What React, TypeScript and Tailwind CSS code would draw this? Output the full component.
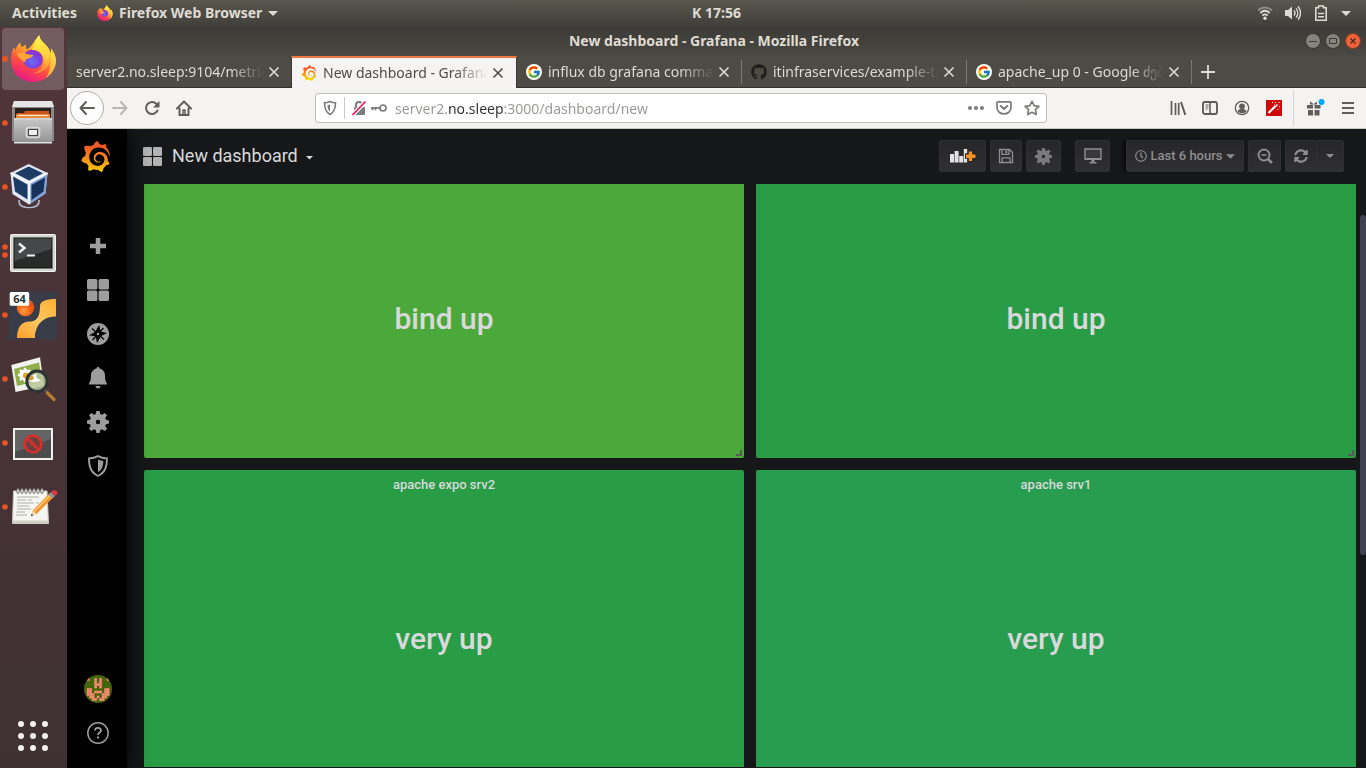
import React from "react";
import { FcGoogle } from "react-icons/fc";
import { FaGithub, FaSyncAlt, FaRegClock } from "react-icons/fa";
import { SiGrafana } from "react-icons/si";

type Children = { children: React.ReactNode };

function FirefoxLogo({ className }: { className: string }) {
  return (
    <svg viewBox="0 0 48 50" className={className} aria-hidden="true">
      <defs>
        <linearGradient id="ff-body" x1="0.75" y1="0" x2="0.3" y2="1">
          <stop offset="0" stopColor="#fff44f" />
          <stop offset="0.35" stopColor="#ffb52b" />
          <stop offset="0.65" stopColor="#ff4f3e" />
          <stop offset="1" stopColor="#e6168c" />
        </linearGradient>
        <linearGradient id="ff-flame" x1="0.5" y1="0" x2="0.6" y2="1">
          <stop offset="0" stopColor="#fff44f" />
          <stop offset="0.6" stopColor="#ffcd3a" />
          <stop offset="1" stopColor="#ff7139" />
        </linearGradient>
        <radialGradient id="ff-globe" cx="0.45" cy="0.65" r="0.65">
          <stop offset="0" stopColor="#6a6cf6" />
          <stop offset="0.6" stopColor="#7a3fe0" />
          <stop offset="1" stopColor="#a62bbb" />
        </radialGradient>
      </defs>
      <path d="M3 13c1 1 1.500 2 2 3C6 12 8 9.500 10 8c0 2 .6 3.600 1.600 5 1.400-1.200 3-2.200 4.400-2.800-.4 2 0 3.800 1 5.200 2-1.200 4-3 5.500-5C25 6.500 27.500 3 30 0c.4 4 2.500 6.500 6 9.500 3.400 3 5.600 6.500 6.200 10 .7-1.400.8-3.300.3-5.500C46 18 48 23 48 27.500 47.500 40 37 50 24 50S0 40 0 27c0-5 .8-9.800 3-14Z" fill="url(#ff-body)" />
      <path d="M42.500 14C46 18 48 23 48 27.500c-.4 8-4.500 14.500-11 18.500 4-6 6-12 5.200-26.500.7-1.400.8-3.300.3-5.500Z" fill="#ffe04a" fillOpacity="0.700" />
      <circle cx="23.500" cy="25.500" r="10.500" fill="url(#ff-globe)" />
      <path d="M30 0c.4 4 2.500 6.500 6 9.500 5 4.500 7 9.500 6.400 15C41.500 36 33 41.500 24 41c7-2.500 11.500-8 11-14.500-.4-4.500-3.600-7.500-7-9.500-2-1-4-1.300-6-1C25.500 11.500 25 6.500 30 0Z" fill="url(#ff-flame)" />
      <path d="M6 20c4-2 7-1.600 10-.2 2.500 1 5 1.200 8 1.200-1 2.500-3.500 3.500-7 4.500-1.500.5-2 2-1.400 3.700-3.600-1-6.600-4.200-9.600-9.200Z" fill="#ffa436" />
    </svg>
  );
}

function GrafanaLogo({ className, from, to }: { className: string; from: string; to: string }) {
  const id = React.useId();
  return (
    <>
      <svg width="0" height="0" className="absolute" aria-hidden="true">
        <defs>
          <linearGradient id={id} x1="0" y1="0" x2="0" y2="1">
            <stop offset="0.200" stopColor={from} />
            <stop offset="1" stopColor={to} />
          </linearGradient>
        </defs>
      </svg>
      <SiGrafana className={className} fill={`url(#${id})`} stroke="none" aria-hidden="true" />
    </>
  );
}

function DockItem({ label, dots = [32], children }: Children & { label: string; dots?: number[] }) {
  return (
    <button type="button" aria-label={label} className="block h-16 w-full">
      <svg viewBox="0 0 67 64" className="h-16 w-full">
        {dots.map((y) => (
          <circle key={y} cx="5" cy={y} r="2.800" fill="#e95420" />
        ))}
        {children}
      </svg>
    </button>
  );
}

function Dock() {
  return (
    <nav aria-label="Dock" className="flex w-[67px] shrink-0 flex-col bg-linear-to-b from-[#513539] to-[#3e3134]">
      <button type="button" aria-label="Firefox Web Browser" className="flex h-16 w-full items-center">
        <span className="ml-0.5 flex h-[62px] w-[62px] items-center rounded bg-[#735c60]">
          <span className="mr-[3px] h-1.5 w-1.5 rounded-full bg-[#e95420]" />
          <FirefoxLogo className="mb-0.5 h-[47px] w-[45px] shrink-0" />
        </span>
      </button>
      <DockItem label="Files">
        <defs>
          <linearGradient id="cab" x1="0" y1="0" x2="0" y2="1">
            <stop offset="0" stopColor="#c9c9c9" />
            <stop offset="1" stopColor="#8e8e8e" />
          </linearGradient>
        </defs>
        <path d="M14 10h38l2 6v34h-2v3H14v-3h-2V16Z" fill="#8a8a8a" />
        <path d="M14 10h38l2 6H12Z" fill="#e4e4e4" />
        <rect x="15" y="17" width="36" height="11" fill="#2b211c" />
        <path d="M17 22h7l1-2h24v8H17Z" fill="#c8561b" />
        <path d="M16 23h34v5H16Z" fill="#e98b3c" />
        <path d="M18 24.500h30" stroke="#fbe6cf" />
        <path d="M14 27h38v26H14Z" fill="url(#cab)" />
        <path d="M14 28h38M14 51.500h38" stroke="#dedede" />
        <rect x="26.500" y="36.500" width="13" height="10" rx="2" fill="#b0b0b0" stroke="#dadada" strokeWidth="1.500" />
        <rect x="28.500" y="38.500" width="9" height="6" fill="#eee" stroke="#444" />
      </DockItem>
      <DockItem label="VirtualBox">
        <path d="M19 45c0 10 20 10 20 0v4c-1 5-19 5-20 0Z" fill="#6c7f9d" stroke="#b8c4d6" />
        <path d="M28.700 9 47.500 18 45.500 38.500 29 49.500 12.500 39 10.500 18Z" fill="#dfe6f1" />
        <path d="M29.300 28.500 47.500 18.500 45.500 38.500 29.300 49.500Z" fill="#7da0d6" />
        <path d="M28.700 11.500 43 18.300 29.200 25.500 15 18.300Z" fill="#1d3c66" />
        <path d="M13 21.500 27.500 29.500V44.500L15 36.500Z" fill="#1b3a64" />
        <path d="M31.500 30 45 22.500 43.500 36.500 31.500 45Z" fill="#173258" />
        <path d="M10.500 18 29.300 28 47.500 18M29.300 28V49" fill="none" stroke="#f4f7fb" strokeWidth="2" />
      </DockItem>
      <DockItem label="Terminal" dots={[28, 36]}>
        <rect x="10.500" y="15.500" width="45" height="37" rx="1" fill="#d5d5d2" stroke="#f3f3f1" />
        <rect x="14" y="19" width="38" height="30" fill="#292b2b" stroke="#111" />
        <path d="M14.500 19.500h37V30l-37 12Z" fill="#454848" />
        <path d="m19 24.500 5.500 4.500-5.500 4.500" fill="none" stroke="#f0f0f0" strokeWidth="2.400" />
        <path d="M27 36.500h8" stroke="#f0f0f0" strokeWidth="2" />
      </DockItem>
      <DockItem label="Sixty-four bit tool">
        <defs>
          <linearGradient id="ribbon" x1="1" y1="0" x2="0" y2="1">
            <stop offset="0" stopColor="#ffae2e" />
            <stop offset="0.500" stopColor="#ffc862" />
            <stop offset="1" stopColor="#ff9d2b" />
          </linearGradient>
          <radialGradient id="ball" cx="0.4" cy="0.7">
            <stop offset="0" stopColor="#ff9c3d" />
            <stop offset="1" stopColor="#f0520f" />
          </radialGradient>
        </defs>
        <rect x="9" y="8.500" width="48" height="48" fill="#383d49" />
        <circle cx="25.500" cy="24.500" r="8.700" fill="url(#ball)" />
        <path d="M56 16c-7 0-16 1-16 7 0 10-3 15-9 15.500-8 0-13.500 3-14 16.500h18c0-13 8-21.500 21-21.500Z" fill="url(#ribbon)" />
        <rect x="9.700" y="9" width="19.500" height="13.700" rx="1.500" fill="#fff" />
        <text x="19.500" y="20" textAnchor="middle" fontFamily="Noto Sans, sans-serif" fontWeight="700" fontSize="11" fill="#2e3436">64</text>
      </DockItem>
      <DockItem label="Image Viewer">
        <path d="m11.300 18 28.700-7.700L44 39l-28.500 6Z" fill="#f1f3ec" />
        <path d="m14 22 25-6.500L42 33l-25 6Z" fill="#8fae49" />
        {[0, 45, 90, 135].map((angle) => (
          <ellipse key={angle} cx="25" cy="28" rx="7.500" ry="2.400" fill="#fff" transform={`rotate(${angle} 25 28)`} />
        ))}
        <circle cx="26" cy="28.500" r="3" fill="#e5a02c" />
        <path d="m44.500 42.500 3.500 3.500" stroke="#555" strokeWidth="3" />
        <path d="m47.500 46 6.500 6.500" stroke="#b67a33" strokeWidth="3.200" strokeLinecap="round" />
        <circle cx="37" cy="34.300" r="10.200" fill="#b9c69a" fillOpacity="0.850" stroke="#2d3436" strokeWidth="3" />
        <path d="M29 34c1-5 5-7 8-7-2 3 0 5 4 6-3 2-8 3-12 1Z" fill="#fff" />
        <path d="M29 31c2-3 4-3 5 0-1 2-3 3-5 2Z" fill="#d59b33" />
      </DockItem>
      <DockItem label="Blocked display">
        <rect x="14" y="18" width="38" height="30" fill="#4b4c4b" stroke="#f1f1f1" strokeWidth="2" />
        <path d="M15 19h36v9L15 41Z" fill="#636463" />
        <circle cx="33" cy="33" r="8.300" fill="#6b4140" stroke="#d3302c" strokeWidth="2.800" />
        <path d="m27 27 12 12" stroke="#d3302c" strokeWidth="3" />
      </DockItem>
      <DockItem label="Text Editor">
        <path d="M13.500 16h33.500l1.500 32.500h-36Z" fill="#f5f5f2" stroke="#c9c9c5" />
        <path d="M13 45.500h35V48H13Z" fill="#cfd0c6" />
        <path d="M17 22h22M17 25h9m2 0h4M17 28h17m2 0h3M17 31h12M17 34h14M16 37h9M16 40h11" stroke="#b0b0ae" />
        {[18, 22, 26, 30, 34, 38, 42].map((x) => (
          <ellipse key={x} cx={x} cy="16" rx="1.200" ry="2.600" fill="#fff" stroke="#6d6f6a" />
        ))}
        <path d="m31 41 1.800-5.500L50 17.800l4 3.900L36.500 39Z" fill="#f2952c" />
        <path d="m31 41 1.800-5.500 3.700 3.500Z" fill="#f1dcb4" />
        <path d="m31 41 .7-2.200 1.500 1.500Z" fill="#111" />
        <path d="m34 36.500 17-17" stroke="#fbc778" strokeWidth="1.500" />
        <path d="m48.500 19.500 2.500-2.500 4 4-2.500 2.500Z" fill="#8b9499" />
        <path d="m51 17 2-1.500c3-.8 5 1.500 4 4L55 21Z" fill="#e0393c" />
      </DockItem>
      <button type="button" aria-label="Show Applications" className="mr-auto mt-auto mb-4 ml-[17px] grid grid-cols-3 gap-1.5 p-px">
        {Array.from({ length: 9 }, (_, i) => (
          <span key={i} className="h-1.5 w-1.5 rounded-full bg-[#f2f0ee]" />
        ))}
      </button>
    </nav>
  );
}

function TopBar() {
  return (
    <header className="grid h-[27px] shrink-0 grid-cols-[1fr_auto_1fr] items-center bg-linear-to-b from-[#5a574e] to-[#3f3e39] pb-px text-sm font-bold text-[#dfdbd2]">
      <div className="flex items-center pl-3">
        <button type="button">Activities</button>
        <button type="button" className="ml-5 flex items-center gap-1.5">
          <FirefoxLogo className="h-4 w-4" />
          <span>Firefox Web Browser</span>
          <svg viewBox="0 0 10 5" className="h-[5px] w-2.5"><path d="M0 0h10L5 5Z" fill="#dfdbd2" /></svg>
        </button>
      </div>
      <time className="pl-[67px]">K 17:56</time>
      <button type="button" aria-label="System menu" className="flex items-center justify-end gap-3 pr-[15px]">
        <svg viewBox="0 0 16 16" className="h-4 w-4" fill="none" strokeWidth="1.800">
          <path d="M1 5.500c4-4 10-4 14 0" stroke="#8d8a83" />
          <path d="M3.300 8c3-2.800 6.400-2.800 9.400 0M5.300 10.600c1.800-1.600 3.600-1.600 5.400 0" stroke="#dfdbd2" />
          <circle cx="8" cy="13.300" r="1.700" fill="#dfdbd2" />
        </svg>
        <svg viewBox="0 0 16 16" className="h-4 w-4" fill="none" stroke="#dfdbd2" strokeWidth="1.400">
          <path d="M0 5h3l4-3.500v13L3 11H0Z" fill="#dfdbd2" stroke="none" />
          <path d="M9 5.500c1.200 1.500 1.200 3.500 0 5M11 3.500c2.300 2.600 2.300 6.400 0 9M13 1.500c3.300 3.600 3.300 9.400 0 13" />
        </svg>
        <svg viewBox="0 0 16 16" className="h-4 w-4" fill="none" stroke="#dfdbd2" strokeWidth="1.600">
          <path d="M5.500 2.800V1h5v1.800h2.700v12.400H2.800V2.800ZM5 8.500h6M5 11.800h6" />
        </svg>
        <svg viewBox="0 0 10 5" className="h-[5px] w-2.5"><path d="M0 0h10L5 5Z" fill="#dfdbd2" /></svg>
      </button>
    </header>
  );
}

function TitleBar() {
  return (
    <div className="grid h-[29px] shrink-0 grid-cols-[1fr_auto_1fr] items-center bg-linear-to-b from-[#3c3b37] to-[#4a4842] pr-[5px] pb-0.5">
      <span />
      <h1 className="text-sm font-bold text-[#dfdbd2]">New dashboard - Grafana - Mozilla Firefox</h1>
      <div className="flex justify-end gap-1">
        <button type="button" aria-label="Minimize" className="h-4 w-4 rounded-full border border-[#363530] bg-[#85837c]">
          <svg viewBox="0 0 14 14"><path d="M3 7.500h8" stroke="#3c3b37" /></svg>
        </button>
        <button type="button" aria-label="Maximize" className="h-4 w-4 rounded-full border border-[#363530] bg-[#85837c]">
          <svg viewBox="0 0 14 14"><path d="M3.500 4.500h7v5h-7Z" fill="none" stroke="#3c3b37" /></svg>
        </button>
        <button type="button" aria-label="Close window" className="h-4 w-4 rounded-full border border-[#8c3a1d] bg-[#ee6137]">
          <svg viewBox="0 0 14 14"><path d="m4.500 4.500 5 5m0-5-5 5" stroke="#46281c" strokeWidth="1.300" /></svg>
        </button>
      </div>
    </div>
  );
}

function Tab({ title, icon, active, divider }: { title: string; icon?: React.ReactNode; active?: boolean; divider?: boolean }) {
  return (
    <div
      className={
        active
          ? "-ml-px flex min-w-0 flex-[0_1_226px] items-center border-x border-t-2 border-x-[#3a3934] border-t-[#f07746] bg-[#f5f4f2] pr-3 pl-[9px] text-[#4c4c4c]"
          : "relative flex min-w-0 flex-[0_1_225px] items-center border-b border-[#33322e] pr-3 pl-[9px] text-[#dfdbd2]"
      }
    >
      {icon && <span className="mr-1.5 shrink-0">{icon}</span>}
      <button type="button" className="min-w-0 flex-1 overflow-hidden text-left text-sm whitespace-nowrap [mask-image:linear-gradient(to_right,black_calc(100%-34px),transparent)]">
        {title}
      </button>
      <button type="button" aria-label={`Close ${title}`} className="ml-1 h-3 w-3 shrink-0">
        <svg viewBox="0 0 12 12" className="h-3 w-3"><path d="m1.500 1.500 9 9m0-9-9 9" stroke="currentColor" strokeWidth="1.600" /></svg>
      </button>
      {divider && <span className="absolute top-1 right-0 h-6 w-px bg-[#7d7a72]" />}
    </div>
  );
}

function GoogleBadge() {
  return (
    <span className="flex h-4 w-4 items-center justify-center rounded-full bg-white">
      <FcGoogle className="h-3.5 w-3.5" />
    </span>
  );
}

function TabStrip() {
  return (
    <div className="flex h-8 shrink-0 bg-[#4e4b44]">
      <Tab title="server2.no.sleep:9104/metrics" />
      <Tab active title="New dashboard - Grafana" icon={<GrafanaLogo className="h-4 w-4" from="#f05a28" to="#ffe600" />} />
      <Tab divider title="influx db grafana command" icon={<GoogleBadge />} />
      <Tab divider title="itinfraservices/example-tools" icon={<FaGithub className="h-4 w-4 text-[#1f1f1d]" />} />
      <Tab divider title="apache_up 0 - Google ძებნა" icon={<GoogleBadge />} />
      <div className="flex flex-1 items-center border-b border-[#33322e] pl-[9px] text-[#dfdbd2]">
        <button type="button" aria-label="New tab" className="h-3.5 w-3.5">
          <svg viewBox="0 0 14 14" className="h-3.5 w-3.5"><path d="M7 0v14M0 7h14" stroke="currentColor" strokeWidth="1.800" /></svg>
        </button>
      </div>
    </div>
  );
}

function IconButton({ label, children, className = "" }: Children & { label: string; className?: string }) {
  return (
    <button type="button" aria-label={label} className={`flex h-8 w-8 shrink-0 items-center justify-center text-[#5e5e5c] ${className}`}>
      {children}
    </button>
  );
}

const ICON = "h-4 w-4";

function NavToolbar() {
  return (
    <div className="flex h-[41px] shrink-0 items-center border-b border-[#c9c5bf] bg-[#f4f3f1]">
      <button type="button" aria-label="Back" className="ml-[3px] flex h-[34px] w-[34px] shrink-0 items-center justify-center rounded-full border border-[#b0aeaa] bg-[#fdfdfd] text-[#5e5e5c]">
        <svg viewBox="0 0 16 16" className={ICON} fill="none" stroke="currentColor" strokeWidth="2" strokeLinecap="round" strokeLinejoin="round"><path d="M15 8H1.500m5.500 6L1.500 8 7 2" /></svg>
      </button>
      <IconButton label="Forward">
        <svg viewBox="0 0 16 16" className="h-4 w-4 text-[#b9b8b6]" fill="none" stroke="currentColor" strokeWidth="2" strokeLinecap="round" strokeLinejoin="round"><path d="M1 8h13.500M9 2l5.500 6L9 14" /></svg>
      </IconButton>
      <IconButton label="Reload">
        <svg viewBox="0 0 16 16" className={ICON} fill="none" stroke="currentColor" strokeWidth="2"><path d="M13.500 10.500A6 6 0 1 1 12.500 4L14 6" strokeLinecap="round" /><path d="M15.500 1v6.500H9Z" fill="currentColor" stroke="none" /></svg>
      </IconButton>
      <IconButton label="Home">
        <svg viewBox="0 0 16 16" className={ICON} fill="none" stroke="currentColor" strokeWidth="2" strokeLinecap="round" strokeLinejoin="round"><path d="M1 8.500 8 1.500l7 7M3.500 8.500V15h9V8.500" /><path d="M7 14.500V10h2v4.500" strokeWidth="1.500" /></svg>
      </IconButton>
      <div className="grow-[116] basis-0" />
      <div className="flex h-[30px] grow-[730] basis-0 items-center rounded-[3px] border border-[#c3c0bc] bg-white pl-1.5 text-[#7b7b7a]">
        <button type="button" aria-label="Tracking protection" className="shrink-0">
          <svg viewBox="0 0 16 16" className={ICON} fill="none" stroke="currentColor" strokeWidth="1.600"><path d="M8 1.500c2 1 3.700 1.300 5.500 1.300 0 5.200-.8 9.200-5.500 11.700C3.300 12 2.500 8 2.500 2.800 4.300 2.800 6 2.500 8 1.500Z" /><path d="M8 4.500c-1 .5-1.600.6-2.600.8.2 3 .8 5 2.600 6.400Z" fill="currentColor" stroke="none" /></svg>
        </button>
        <span className="mx-1.5 h-[22px] w-px shrink-0 bg-[#c9c7c4]" />
        <button type="button" aria-label="Connection is not secure" className="shrink-0">
          <svg viewBox="0 0 16 16" className={ICON}><path d="M5 7V5a3 3 0 0 1 6 0v2" fill="none" stroke="currentColor" strokeWidth="2" /><rect x="3" y="7" width="11" height="8" rx="1" fill="currentColor" /><path d="M2 14.500 14.500 1.500" stroke="#fff" strokeWidth="4" /><path d="M1.500 15 14.500 1.500" stroke="#f5145b" strokeWidth="1.800" /></svg>
        </button>
        <button type="button" aria-label="Saved login" className="ml-1 shrink-0">
          <svg viewBox="0 0 16 16" className={ICON} fill="none" stroke="currentColor" strokeWidth="1.700"><circle cx="12" cy="8" r="3" /><path d="M0 7.800h9M1.500 8v2.300M4.500 8v2.300" /></svg>
        </button>
        <input
          type="text"
          aria-label="Address"
          defaultValue="server2.no.sleep:3000/dashboard/new"
          className="ml-2 h-full min-w-0 flex-1 bg-[linear-gradient(to_right,#979795_54px,#2f2f2f_54px,#2f2f2f_108px,#979795_108px)] bg-clip-text text-sm text-transparent outline-none"
        />
        <button type="button" aria-label="Page actions" className="mr-3 shrink-0">
          <svg viewBox="0 0 16 16" className={ICON} fill="currentColor"><circle cx="2" cy="8" r="2" /><circle cx="8" cy="8" r="2" /><circle cx="14" cy="8" r="2" /></svg>
        </button>
        <button type="button" aria-label="Save to Pocket" className="mr-3 shrink-0">
          <svg viewBox="0 0 16 16" className={ICON} fill="none" stroke="currentColor" strokeWidth="1.700" strokeLinecap="round" strokeLinejoin="round"><path d="M2 1.800h12c.6 0 1 .4 1 1v4.400c0 9-14 9-14 0V2.800c0-.6.4-1 1-1Z" /><path d="M4.800 6 8 9l3.200-3" strokeWidth="2" /></svg>
        </button>
        <button type="button" aria-label="Bookmark this page" className="mr-1.5 shrink-0">
          <svg viewBox="0 0 16 16" className={ICON} fill="none" stroke="currentColor" strokeWidth="1.700" strokeLinejoin="round"><path d="m8 1.300 2.100 4.400 4.800.6-3.500 3.400.9 4.800L8 12.200l-4.300 2.300.9-4.800L1.100 6.300l4.800-.6Z" /></svg>
        </button>
      </div>
      <div className="grow-[116] basis-0" />
      <IconButton label="Library">
        <svg viewBox="0 0 16 16" className={ICON} stroke="currentColor" strokeWidth="2"><path d="M1.500 1v14M5.500 3v12M8.700 3v12" strokeWidth="1.700" /><path d="m11 2 4.300 13" /></svg>
      </IconButton>
      <IconButton label="Sidebars">
        <svg viewBox="0 0 16 16" className={ICON} fill="none" stroke="currentColor"><rect x="1" y="2" width="14" height="12" rx="2" strokeWidth="1.900" /><path d="M8 2v12" strokeWidth="1.600" /><path d="M3.500 5h3M3.500 7h3M3.500 9h2" /></svg>
      </IconButton>
      <IconButton label="Account">
        <svg viewBox="0 0 16 16" className={ICON} fill="currentColor"><circle cx="8" cy="8" r="6.700" fill="none" stroke="currentColor" strokeWidth="1.300" /><circle cx="8" cy="6.300" r="2.900" /><path d="M3.500 11c1-1.500 2-2 4.500-2s3.500.5 4.500 2c-1 1.500-2.500 2.300-4.500 2.300S4.500 12.500 3.500 11Z" /></svg>
      </IconButton>
      <IconButton label="Magic wand">
        <svg viewBox="0 0 16 16" className={ICON}><rect width="16" height="16" fill="#cd0a0a" /><path d="m2.500 13 7-7" stroke="#fff" strokeWidth="2.200" /><path d="m9.500 6.500 2-2" stroke="#fff" strokeWidth="1.500" /><path d="M6 2.500h1M9 2l.7 1M12.500 3l1-1M13 6.500l1 .5M11.500 9l1 1M8 4l.5.5" stroke="#fff" /></svg>
      </IconButton>
      <span className="ml-[3px] h-[34px] w-px bg-[#d6d3cf]" />
      <IconButton label="What's new" className="ml-1.5">
        <svg viewBox="0 0 20 18" className="h-[18px] w-5" fill="currentColor"><path d="M1 6h6v3.500H1ZM8.500 6h6v3.500h-6ZM2 11h5v5.500H2ZM8.500 11h5v5.500h-5Z" /><path d="M4 2.500 7.700 5l3.300-2.500V5.500H4Z" /><circle cx="15.500" cy="3" r="3" fill="#00a9f4" /></svg>
      </IconButton>
      <IconButton label="Open menu" className="mr-0.5">
        <svg viewBox="0 0 16 16" className={ICON} stroke="currentColor" strokeWidth="2"><path d="M2 3h12M2 8h12M2 13h12" /></svg>
      </IconButton>
    </div>
  );
}

const GEAR =
  "M9.400 0h3.200l.6 3 1.900.8L17.700 2l2.300 2.300-1.800 2.600.8 1.900 3 .6v3.200l-3 .6-.8 1.900 1.800 2.600-2.300 2.300-2.600-1.800-1.900.8-.6 3H9.400l-.6-3-1.900-.8L4.300 20 2 17.700l1.800-2.600-.8-1.900-3-.6V9.400l3-.6.8-1.900L2 4.300 4.300 2l2.600 1.800L8.800 3ZM11 8.800a2.200 2.200 0 1 0 0 4.400 2.200 2.200 0 0 0 0-4.400Z";

function SquaresIcon({ className }: { className: string }) {
  return (
    <svg viewBox="0 0 22 22" className={className} fill="currentColor" aria-hidden="true">
      <rect width="10.400" height="10.400" rx="1.500" />
      <rect x="11.600" width="10.400" height="10.400" rx="1.500" />
      <rect y="11.600" width="10.400" height="10.400" rx="1.500" />
      <rect x="11.600" y="11.600" width="10.400" height="10.400" rx="1.500" />
    </svg>
  );
}

function SideLink({ label, children }: Children & { label: string }) {
  return (
    <a href="#" aria-label={label} className="flex h-11 w-full items-center justify-center text-[#9d9d9e]">
      {children}
    </a>
  );
}

const AVATAR = [
  "X..X.X..X",
  "...X.X...",
  "...XXX...",
  "...X.X...",
  "XX.....XX",
  "XX.XXX.XX",
  "XXX...XXX",
  ".XX.X.XX.",
  "..XX.XX..",
];

function SideMenu() {
  return (
    <aside className="z-10 flex w-[60px] shrink-0 flex-col items-center bg-black pl-0.5 shadow-[0_0_20px_#000]">
      <a href="#" aria-label="Grafana home" className="mt-3 mr-[5px]">
        <GrafanaLogo className="h-[31px] w-[31px]" from="#f05a28" to="#fbca0a" />
      </a>
      <nav aria-label="Grafana" className="mt-[52px] w-full">
        <SideLink label="Create">
          <svg viewBox="0 0 16 16" className="h-4 w-4"><path d="M8 0v16M0 8h16" stroke="currentColor" strokeWidth="4.500" /></svg>
        </SideLink>
        <SideLink label="Dashboards">
          <SquaresIcon className="h-[22px] w-[22px]" />
        </SideLink>
        <SideLink label="Explore">
          <svg viewBox="0 0 22 22" className="h-[22px] w-[22px]">
            <circle cx="11" cy="11" r="11" fill="currentColor" />
            <path d="m12.200 2 1.400 6.400L20 10l-5.800 2.900L10 20l-1.300-6.400L2 12.200l6-3.100Z" fill="#000" />
            <path d="m5 5.500 12 11M16.500 5l-11 12" stroke="#000" strokeWidth="1.200" />
            <circle cx="11" cy="11" r="1.300" fill="currentColor" />
          </svg>
        </SideLink>
        <SideLink label="Alerting">
          <svg viewBox="0 0 22 22" className="h-[22px] w-[22px]" fill="currentColor"><path d="M11 0c.9 0 1.500.6 1.500 1.500 3.500.7 5.500 3.600 5.500 7 0 4.500.8 6 2 8v1H2v-1c1.200-2 2-3.500 2-8 0-3.400 2-6.300 5.500-7C9.500.6 10.100 0 11 0ZM8.500 19h5c-.3 1.700-1.200 2.500-2.500 2.500S8.800 20.700 8.500 19Z" /></svg>
        </SideLink>
        <SideLink label="Configuration">
          <svg viewBox="0 0 22 22" className="h-[22px] w-[22px]" fill="currentColor"><path d={GEAR} fillRule="evenodd" /></svg>
        </SideLink>
        <SideLink label="Server admin">
          <svg viewBox="0 0 22 22" className="h-[22px] w-[22px]"><path d="M11 1.200c3 1.600 6 2.200 9 2.300 0 8-1.500 13.500-9 17.500C3.500 17 2 11.500 2 3.500c3-.1 6-.7 9-2.300Z" fill="none" stroke="currentColor" strokeWidth="1.900" /><path d="M11 4.500c1.700.8 3.600 1.300 5.300 1.500 0 5-1.300 8.800-5.300 11.300Z" fill="currentColor" /></svg>
        </SideLink>
      </nav>
      <nav aria-label="Account and help" className="mt-auto mb-[13px] w-full">
        <SideLink label="Profile">
          <svg viewBox="0 0 28 28" className="h-7 w-7">
            <defs><clipPath id="avatar-clip"><circle cx="14" cy="14" r="14" /></clipPath></defs>
            <g clipPath="url(#avatar-clip)">
              <rect width="28" height="28" fill="#45650a" />
              {AVATAR.map((row, y) =>
                row.split("").map((cell, x) =>
                  cell === "X" ? <rect key={`${x}-${y}`} x={2.8 + x * 2.5} y={3.2 + y * 2.5} width="2.600" height="2.600" fill="#fb8a76" /> : null,
                ),
              )}
            </g>
          </svg>
        </SideLink>
        <SideLink label="Help">
          <svg viewBox="0 0 22 22" className="h-[22px] w-[22px]" fill="none" stroke="currentColor"><circle cx="11" cy="11" r="10.200" strokeWidth="1.500" /><path d="M8 8.500c0-3.500 6-3.500 6 0 0 2-3 2.200-3 4.500" strokeWidth="1.800" /><path d="M11 14.500v2" strokeWidth="2" /></svg>
        </SideLink>
      </nav>
    </aside>
  );
}

function NavButton({ label, className, children }: Children & { label: string; className: string }) {
  return (
    <button type="button" aria-label={label} className={`flex h-8 items-center justify-center border border-[#2f2f32] bg-linear-to-b from-[#262628] to-[#303032] text-[#8e8e8e] ${className}`}>
      {children}
    </button>
  );
}

function DashboardNav() {
  return (
    <div className="flex h-[55px] shrink-0 items-center pr-[22px] pb-px pl-4 text-[#d8d9da]">
      <button type="button" className="flex items-center">
        <SquaresIcon className="h-[19px] w-[19px] text-[#b3b3b3]" />
        <span className="ml-[10px] text-lg">New dashboard</span>
        <svg viewBox="0 0 8 4" className="mt-1 ml-2 h-1 w-2"><path d="M0 0h7L3.500 3.500Z" fill="currentColor" /></svg>
      </button>
      <div className="ml-auto flex items-center gap-1">
        <NavButton label="Add panel" className="w-[47px] rounded-xs">
          <svg viewBox="0 0 26 16" className="h-4 w-[26px]">
            <path d="M0 6h4v8.500H0ZM4.600 3h4v11.500h-4ZM9.200 8h4v6.500h-4ZM13.800 1h3.400v13.500h-3.400Z" fill="#e3e3e3" />
            <path d="M20.500 2.500v11.500M15 8h11" stroke="#242426" strokeWidth="5.500" />
            <path d="M20.500 3.500v9.500M16 8.200h9.500" stroke="#f79227" strokeWidth="3.400" />
          </svg>
        </NavButton>
        <NavButton label="Save dashboard" className="w-8 rounded-xs">
          <svg viewBox="0 0 16 16" className={ICON} fill="none" stroke="currentColor" strokeWidth="1.300"><path d="M1.500 1.500h10l3 3v10h-13ZM4 1.500v4.800h7V1.500M4 14.500V9.800h8v4.700" /><path d="M8.300 2.500v2.800" strokeWidth="2" /></svg>
        </NavButton>
        <NavButton label="Dashboard settings" className="w-[35px] rounded-xs">
          <svg viewBox="0 0 22 22" className="h-[17px] w-[17px] text-[#7a7a7a]" fill="currentColor"><path d={GEAR} fillRule="evenodd" /></svg>
        </NavButton>
        <NavButton label="Cycle view mode" className="ml-[10px] w-[35px] rounded-xs">
          <svg viewBox="0 0 18 16" className="h-4 w-[18px]"><path d="M1 1h16v10H1Z" fill="#38383a" stroke="currentColor" strokeWidth="1.400" /><path d="M1 10h16v2H1ZM7.500 12h3v2h2v1.500h-7V14h2Z" fill="currentColor" /></svg>
        </NavButton>
        <NavButton label="Time range: last 6 hours" className="ml-3 w-[118px] gap-[3px] rounded-xs shadow-[-3px_0_3px_#0b0b0c]">
          <FaRegClock className="h-3 w-3 shrink-0" />
          <span className="text-[13px] font-medium whitespace-nowrap">Last 6 hours</span>
          <svg viewBox="0 0 10 5" className="h-[5px] w-[9px] shrink-0"><path d="M0 0h10L5 5Z" fill="currentColor" /></svg>
        </NavButton>
        <NavButton label="Zoom out" className="w-[33px] rounded-xs">
          <svg viewBox="0 0 16 16" className={ICON} fill="none" stroke="currentColor"><circle cx="7" cy="7" r="5.500" strokeWidth="1.900" /><path d="m11 11 4 4" strokeWidth="2.600" /><path d="M4.500 7h5" strokeWidth="1.600" /></svg>
        </NavButton>
        <div className="flex">
          <NavButton label="Refresh" className="w-8 rounded-l-xs">
            <FaSyncAlt className="h-3.5 w-3.5" />
          </NavButton>
          <NavButton label="Refresh interval" className="w-[27px] rounded-r-xs border-l-0">
            <svg viewBox="0 0 8 4" className="h-1 w-2"><path d="M0 0h8L4 4Z" fill="currentColor" /></svg>
          </NavButton>
        </div>
      </div>
    </div>
  );
}

function Panel({ title, value, color, resizable }: { title?: string; value: string; color: string; resizable?: boolean }) {
  return (
    <section className={`relative flex h-[308px] flex-col rounded-xs text-[#d8d9da] ${color}`}>
      <h2 className="h-7 pt-1 text-center text-[13px] leading-[22px] font-medium">{title}</h2>
      <p className="flex flex-1 items-center justify-center pt-0.5 text-3xl font-medium">{value}</p>
      {resizable && <span className="absolute right-0.5 bottom-0.5 h-1.5 w-1.5 border-r-2 border-b-2 border-[#565b58]" />}
    </section>
  );
}

function Dashboard() {
  return (
    <main className="relative flex min-w-0 flex-1 flex-col bg-[#161719]">
      <DashboardNav />
      <div className="min-h-0 flex-1 overflow-hidden border-b border-[#161719]">
        <div className="-mt-[34px] grid grid-cols-2 gap-3 pr-[10px] pl-[17px]">
          <Panel resizable value="bind up" color="bg-[#4ba93c]" />
          <Panel resizable value="bind up" color="bg-[#299c46]" />
          <Panel title="apache expo srv2" value="very up" color="bg-[#299c46]" />
          <Panel title="apache srv1" value="very up" color="bg-[#299d4f]" />
        </div>
      </div>
      <span className="absolute top-[86px] right-0 h-[340px] w-1.5 rounded-[3px] bg-[#404050]" />
    </main>
  );
}

export default function App() {
  return (
    <div className="flex h-screen flex-col overflow-hidden font-['Noto_Sans',sans-serif]">
      <TopBar />
      <div className="flex min-h-0 flex-1">
        <Dock />
        <div className="flex min-w-0 flex-1 flex-col">
          <TitleBar />
          <TabStrip />
          <NavToolbar />
          <div className="flex min-h-0 flex-1 overflow-hidden font-[Roboto,sans-serif]">
            <SideMenu />
            <Dashboard />
          </div>
        </div>
      </div>
    </div>
  );
}
